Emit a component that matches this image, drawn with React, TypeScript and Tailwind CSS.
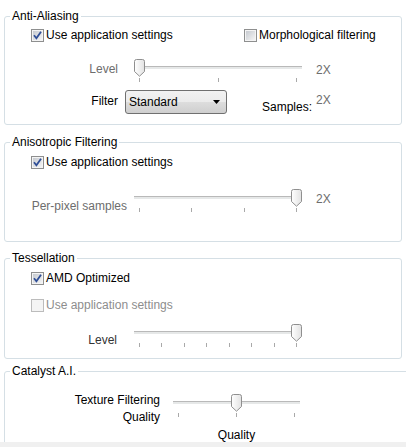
import React from "react";

type CheckboxProps = { checked?: boolean; disabled?: boolean };

const Checkbox = ({ checked, disabled }: CheckboxProps) => (
  <svg width="13" height="13" viewBox="0 0 13 13" className="shrink-0">
    <defs>
      <linearGradient id="cb-fill" x1="0" y1="0" x2="1" y2="1">
        <stop offset="0" stopColor="#c6cad0" />
        <stop offset="1" stopColor="#f4f4f4" />
      </linearGradient>
    </defs>
    <rect
      x="0.5"
      y="0.5"
      width="12"
      height="12"
      fill="#f4f4f4"
      stroke={disabled ? "#bcbcbc" : "#8e8f8f"}
    />
    {!disabled && (
      <rect x="2" y="2" width="9" height="9" fill="url(#cb-fill)" />
    )}
    {checked && (
      <path
        d="M3 6.3 L5.4 9.2 L10 2.8"
        fill="none"
        stroke="#2f4e96"
        strokeWidth="1.8"
      />
    )}
  </svg>
);

const Thumb = ({ left }: { left: number }) => (
  <svg
    width="11"
    height="18"
    viewBox="0 0 11 18"
    className="absolute top-0"
    style={{ left }}
  >
    <defs>
      <linearGradient id="thumb-fill" x1="0" y1="0" x2="1" y2="0">
        <stop offset="0" stopColor="#ffffff" />
        <stop offset="1" stopColor="#e2e2e2" />
      </linearGradient>
    </defs>
    <path
      d="M0.5 2.5 Q0.5 0.5 2.5 0.5 H8.5 Q10.5 0.5 10.5 2.5 V12.5 L5.5 17.2 L0.5 12.5 Z"
      fill="url(#thumb-fill)"
      stroke="#8f8f8f"
    />
  </svg>
);

type SliderProps = { className: string; width: number; ticks: number; pos: number };

const Slider = ({ className, width, ticks, pos }: SliderProps) => (
  <div className={`relative h-[23px] shrink-0 ${className}`}>
    {/* channel */}
    <div className="mt-[7px] h-[3px] border-t border-[#b9b9b9] bg-[#e6e8e8]" />
    {/* tick marks */}
    <div className="mt-[9px] flex justify-between px-[5px]">
      {Array.from({ length: ticks }).map((_, i) => (
        <span key={i} className="h-[4px] w-px bg-[#a9a9a9]" />
      ))}
    </div>
    <Thumb left={Math.round(pos * (width - 11))} />
  </div>
);

const Dropdown = () => (
  <div
    className="ml-[7px] flex h-[24px] w-[102px] items-center justify-between rounded-[3px]
    border border-[#707070] pl-[3px] pr-[6px]
    bg-[linear-gradient(to_bottom,#f2f2f2_0%,#ebebeb_50%,#dddddd_50%,#cfcfcf_100%)]"
  >
    <span>Standard</span>
    <svg width="7" height="4" viewBox="0 0 7 4">
      <path d="M0 0 H7 L3.5 4 Z" fill="#000" />
    </svg>
  </div>
);

const Group = ({
  title,
  className,
  children,
}: {
  title: string;
  className?: string;
  children: React.ReactNode;
}) => (
  <fieldset className={`rounded-[3px] border border-[#d5dfe5] ${className ?? ""}`}>
    <legend className="ml-[5px] px-[2px] leading-4">{title}</legend>
    {children}
  </fieldset>
);

const App = () => {
  return (
    <div
      className="flex h-[447px] w-[406px] flex-col overflow-hidden bg-white
      font-['Liberation_Sans',Arial,sans-serif] text-[12px] leading-4 text-black"
    >
      <div className="flex-1 overflow-hidden px-[4px] pt-[8px]">
        {/* anti-aliasing */}
        <Group title="Anti-Aliasing" className="pb-[9px]">
          <div className="mt-[3px] flex h-4 items-center pl-[26px]">
            <div className="flex w-[213px] items-center gap-[2px]">
              <Checkbox checked />
              <span>Use application settings</span>
            </div>
            <div className="flex items-center gap-[2px]">
              <Checkbox />
              <span>Morphological filtering</span>
            </div>
          </div>

          <div className="mt-[16px] flex">
            <span className="mt-[2px] w-[113px] text-right text-[#6d6d6d]">Level</span>
            <Slider className="ml-[16px] w-[168px]" width={168} ticks={3} pos={0} />
            <span className="ml-[14px] mt-[3px] text-[#6d6d6d]">2X</span>
          </div>

          <div className="mt-[8px] flex">
            <span className="mt-[3px] w-[113px] text-right">Filter</span>
            <Dropdown />
            <span className="ml-[35px] mt-[9px] w-[54px] whitespace-nowrap">Samples:</span>
            <span className="mt-[2px] text-[#6d6d6d]">2X</span>
          </div>
        </Group>

        {/* anisotropic filtering */}
        <Group title="Anisotropic Filtering" className="mt-[9px] pb-[27px]">
          <div className="mt-[4px] flex h-4 items-center gap-[2px] pl-[26px]">
            <Checkbox checked />
            <span>Use application settings</span>
          </div>

          <div className="mt-[19px] flex">
            <span className="mt-[9px] w-[122px] text-right text-[#6d6d6d]">
              Per-pixel samples
            </span>
            <Slider className="ml-[7px] w-[168px]" width={168} ticks={4} pos={1} />
            <span className="ml-[14px] mt-[2px] text-[#6d6d6d]">2X</span>
          </div>
        </Group>

        {/* tessellation */}
        <Group title="Tessellation" className="mt-[8px] pb-[10px]">
          <div className="mt-[4px] flex h-4 items-center gap-[2px] pl-[26px]">
            <Checkbox checked />
            <span>AMD Optimized</span>
          </div>
          <div className="mt-[11px] flex h-4 items-center gap-[2px] pl-[26px] text-[#8d8d8d]">
            <Checkbox disabled />
            <span>Use application settings</span>
          </div>

          <div className="mt-[11px] flex">
            <span className="mt-[8px] w-[112px] text-right text-[#333]">Level</span>
            <Slider className="ml-[17px] w-[168px]" width={168} ticks={8} pos={1} />
          </div>
        </Group>

        {/* catalyst a.i. */}
        <Group title="Catalyst A.I." className="mt-[4px] h-[110px] w-[412px]">
          <div className="mt-[13px] flex">
            <div className="w-[155px] text-right leading-[17px]">
              Texture Filtering
              <br />
              Quality
            </div>
            <div className="ml-[13px] mt-[2px] flex w-[127px] flex-col items-center">
              <Slider className="w-[127px]" width={127} ticks={3} pos={0.5} />
              <span className="mt-[10px]">Quality</span>
            </div>
          </div>
        </Group>
      </div>

      {/* bottom strip */}
      <div className="h-[5px] shrink-0 bg-[#f0f0f0]" />
    </div>
  );
};

export default App;
